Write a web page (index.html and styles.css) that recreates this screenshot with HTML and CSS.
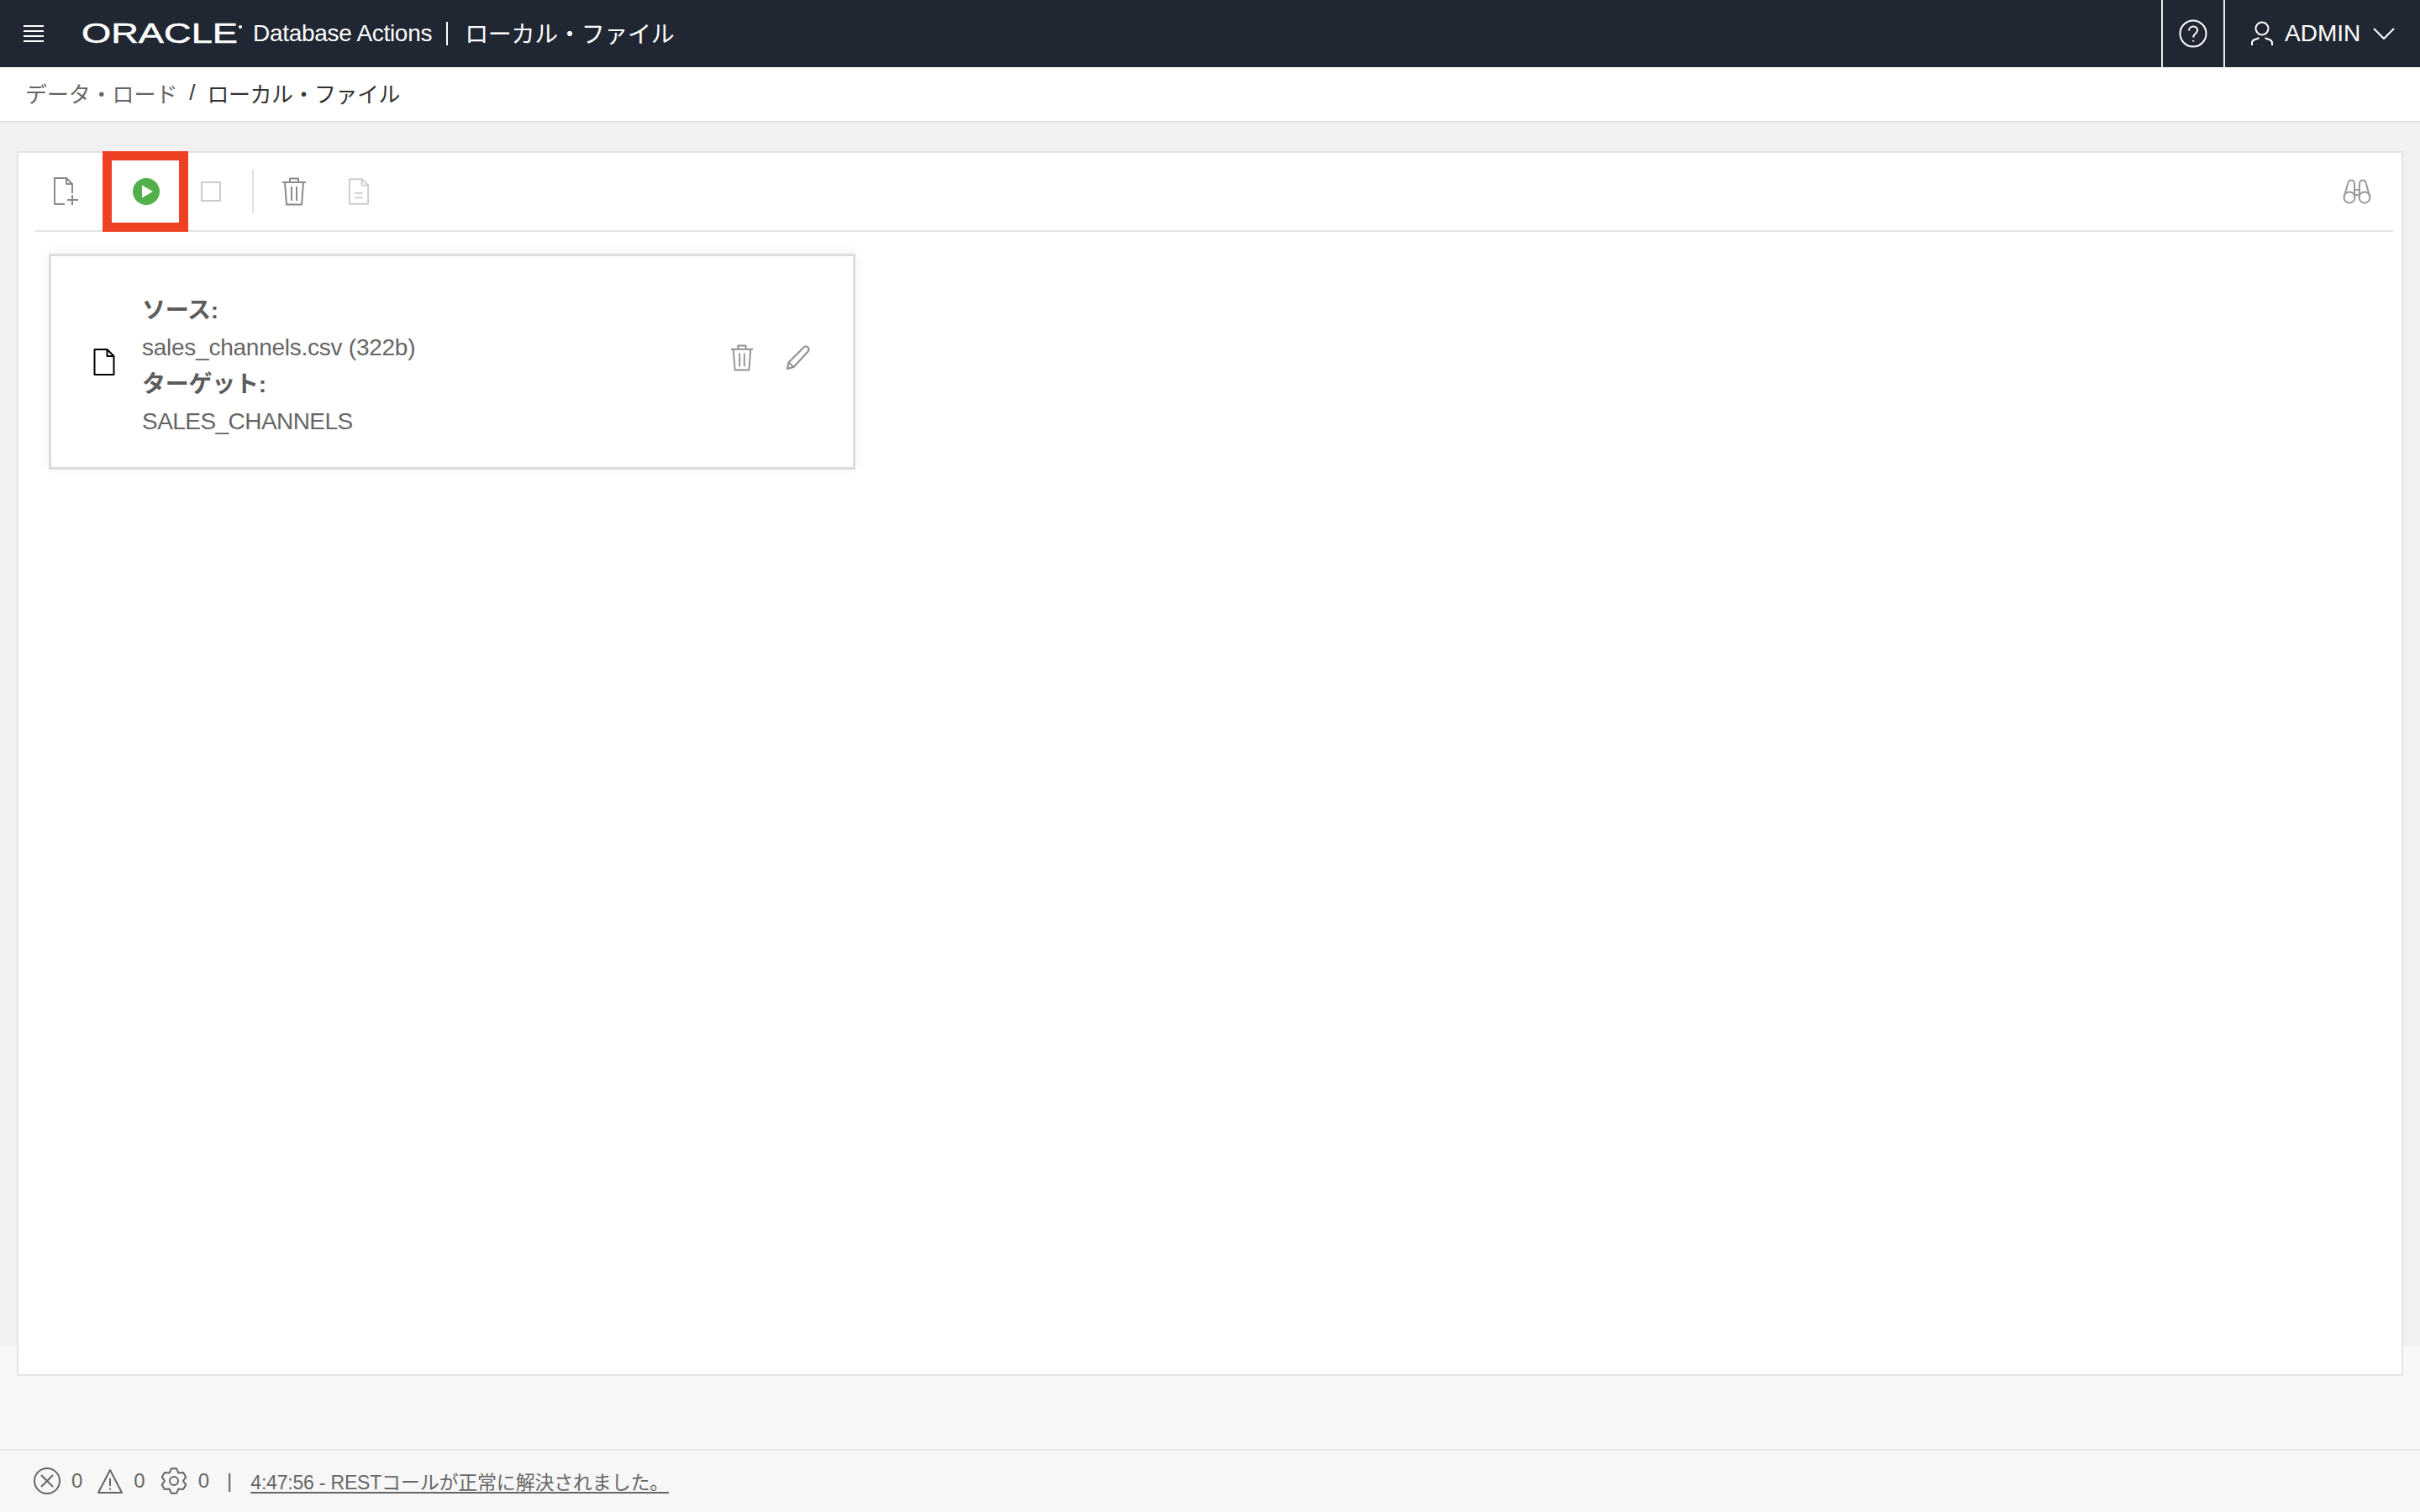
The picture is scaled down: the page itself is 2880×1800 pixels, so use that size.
FILE: index.html
```html
<!DOCTYPE html>
<html lang="ja">
<head>
<meta charset="utf-8">
<title>ローカル・ファイル</title>
<link rel="stylesheet" href="styles.css">
</head>
<body>
<header class="topbar">
  <div class="brand">
    <svg class="ico burger" viewBox="0 0 24 20"><path d="M0 1h24M0 7h24M0 13h24M0 19h24"/></svg>
    <svg class="logo" viewBox="0 0 192 26"><text x="0" y="24" textLength="186" lengthAdjust="spacingAndGlyphs">ORACLE</text><circle cx="189" cy="5" r="2"/></svg>
    <span class="app">Database Actions</span>
    <span class="pipe"></span>
    <span class="title">ローカル・ファイル</span>
  </div>
  <div class="tools">
    <div class="help"><svg class="ico" viewBox="0 0 34 34"><circle cx="17" cy="17" r="15.5"/><path d="M12 13.500c0-3 2.300-5 5.200-5s5 2 5 4.600c0 4-5 4-5 8.400"/><path d="M17.200 25v1.500"/></svg></div>
    <div class="user">
      <svg class="ico person" viewBox="0 0 26 30"><circle cx="13" cy="9" r="7.5"/><path d="M1 29v-3c0-2 1-3 3-3.800l5.500-2M25 29v-3c0-2-1-3-3-3.800l-5.500-2"/></svg>
      <span>ADMIN</span>
      <svg class="ico chevron" viewBox="0 0 26 14"><path d="M1 1l12 12L25 1"/></svg>
    </div>
  </div>
</header>
<nav class="crumbs"><span class="crumb-parent">データ・ロード</span><span class="crumb-sep">/</span><span class="crumb-current">ローカル・ファイル</span></nav>
<main class="main">
  <section class="panel">
    <div class="toolbar">
      <div class="tb-left">
        <button class="tb tb-new" type="button"><svg class="ico gray w30" viewBox="0 0 30 34"><path d="M13 32H1V1h14l7 7v11M15 1v7h7M22 21v12M16 27h13"/></svg></button>
        <button class="tb run" type="button"><svg class="play" viewBox="0 0 32 32"><circle cx="16" cy="16" r="16"/><path d="M11 8.500L24 16 11 23.500z"/></svg></button>
        <button class="tb stop" type="button"><span class="stopbox"></span></button>
        <span class="tb-div"></span>
        <button class="tb tb-trash" type="button"><svg class="ico gray w30" viewBox="0 0 30 34"><path d="M1 6h28M4 6l2 26.500h18L26 6M10 6V1.500h10V6M12 11v17M18 11v17"/></svg></button>
        <button class="tb" type="button"><svg class="ico light" viewBox="0 0 26 34"><path d="M1 1h16l8 8v24H1zM17 1v8h8M8 19h10M8 25h10"/></svg></button>
      </div>
      <svg class="ico binoc" viewBox="0 0 34 30"><circle cx="8" cy="22" r="6.5"/><circle cx="26" cy="22" r="6.5"/><path d="M1.500 22L6 6c.6-3 2-4.500 4-4.500s4 1.500 4 4.500v16M32.500 22L28 6c-.6-3-2-4.500-4-4.500S20 3 20 6v16M14 13h6M14 19h6"/></svg>
    </div>
    <article class="card">
      <svg class="ico filedark" viewBox="0 0 26 32"><path d="M1.500 1h15l8 8v22h-23zM16.500 1v8h8"/></svg>
      <div class="card-text">
        <div class="label">ソース:</div>
        <div>sales_channels.csv (322b)</div>
        <div class="label">ターゲット:</div>
        <div class="target">SALES_CHANNELS</div>
      </div>
      <div class="card-actions">
        <svg class="ico trash2" viewBox="0 0 30 34"><path d="M1 6h28M4 6l2 26.500h18L26 6M10 6V1.500h10V6M12 11v17M18 11v17"/></svg>
        <svg class="ico pencil" viewBox="0 0 30 30"><path d="M2 28l1.500-7.500L21.500 2.500c1.500-1.500 3.500-1.500 5 0s1.500 3.500 0 5L9.500 26zM3.500 20.500l6 5.500"/></svg>
      </div>
    </article>
  </section>
</main>
<footer class="status">
  <svg class="ico dim i1" viewBox="0 0 32 32"><circle cx="16" cy="16" r="15"/><path d="M9 9l14 14M23 9L9 23"/></svg><span class="n">0</span>
  <svg class="ico dim i2" viewBox="0 0 30 30"><path d="M15 2L1 29h28zM15 12v9M15 23.500v2"/></svg><span class="n">0</span>
  <svg class="ico dim i3" viewBox="0 0 32 32"><path d="M19.100 1.300h-6.200l-2.400 5.200-5.600-.5-3.200 5.400L5 16l-3.300 4.600 3.200 5.400 5.600-.5 2.400 5.200h6.200l2.400-5.200 5.600.5 3.200-5.400L27 16l3.300-4.600-3.200-5.400-5.600.5z"/><circle cx="16" cy="16" r="5"/></svg><span class="n n-last">0</span>
  <span class="bar">|</span>
  <a class="msg" href="#">4:47:56 - RESTコールが正常に解決されました。</a>
</footer>
</body>
</html>
```
FILE: styles.css
```css
*, *::before, *::after { box-sizing: border-box; }
html, body { margin: 0; height: 100%; }
body {
  width: 2880px; height: 1800px; display: flex; flex-direction: column; overflow: hidden;
  font-family: "Liberation Sans", "Noto Sans CJK JP", sans-serif; color: #666;
  background: #f7f7f7;
}
.ico { display: block; fill: none; stroke: currentColor; stroke-width: 2; stroke-linejoin: round; flex: none; overflow: visible; }
.topbar { height: 80px; flex: none; background: #202733; color: #fff; display: flex; justify-content: space-between; }
.brand { display: flex; align-items: center; padding-left: 28px; font-size: 28px; }
.burger { width: 24px; height: 20px; margin-right: 45px; }
.logo { width: 192px; height: 26px; margin-right: 12px; fill: #fff; overflow: visible; }
.logo text { font-family: "Liberation Sans", sans-serif; font-size: 33px; stroke: #fff; stroke-width: .5; }
.app { letter-spacing: -.3px; }
.pipe { width: 2px; height: 28px; background: #fff; margin: 0 20px 0 17px; }
.title { font-size: 28px; letter-spacing: -.3px; margin-bottom: 2px; }
.tools { display: flex; }
.help { width: 76px; border-left: 2px solid #e8e8e8; border-right: 2px solid #e8e8e8; display: flex; align-items: center; justify-content: center; }
.help svg { width: 34px; height: 34px; }
.user { width: 232px; padding-left: 31px; display: flex; align-items: center; font-size: 28px; }
.person { width: 26px; height: 30px; margin-right: 14px; }
.chevron { width: 26px; height: 14px; margin-left: 15px; }
.crumbs { height: 66px; flex: none; background: #fff; border-bottom: 2px solid #dfe3e8; padding-left: 30px; display: flex; align-items: center; font-size: 26px; color: #333; padding-bottom: 4px; }
.crumb-parent { color: #666; letter-spacing: -.1px; }
.crumb-sep { margin: 0 14px; }
.crumb-current { letter-spacing: -.5px; }
.main { flex: 1; padding: 34px 20px 87px; background: linear-gradient(#f1f1f1 0, #f1f1f1 1457px, #f7f7f7 1457px); }
.panel { width: 2840px; height: 1458px; background: #fff; border: 2px solid #e4e4e4; border-radius: 2px; padding: 0 10px 0 20px; }
.toolbar { height: 94px; border-bottom: 2px solid #e2e2e2; display: flex; align-items: center; justify-content: space-between; padding: 0 26px 0 22px; }
.tb-left { display: flex; align-items: center; position: relative; }
.tb { border: 0; background: none; padding: 0; display: flex; align-items: center; justify-content: center; color: #858585; }
.tb-new { width: 30px; margin-right: 64px; }
.run { width: 32px; position: relative; margin-right: 49px; }
.run::after { content: ""; position: absolute; left: -36px; top: -32px; width: 102px; height: 96px; border: 11px solid #ee4023; }
.play { width: 32px; height: 32px; display: block; }
.play circle { fill: #52b04a; }
.play path { fill: #fff; }
.stop { width: 24px; margin-right: 37px; }
.stopbox { display: block; width: 24px; height: 24px; border: 2px solid #ccc; }
.tb-div { width: 2px; height: 52px; background: #e2e2e2; margin-right: 33px; }
.tb-trash { width: 30px; margin-right: 50px; }
.w30 { width: 30px; height: 34px; }
.light { color: #ccc; width: 24px; height: 32px; }
.gray { color: #8a8a8a; }
.binoc { width: 34px; height: 30px; color: #999; }
.card { position: relative; width: 960px; height: 257px; margin: 26px 0 0 16px; border: 3px solid #dcdcdc; box-shadow: 0 0 16px rgba(0,0,0,.06); display: flex; align-items: center; padding: 0 50px; background: #fff; }
.filedark { width: 26px; height: 32px; color: #000; margin-right: 33px; }
.card-text { flex: 1; font-size: 28px; line-height: 44px; letter-spacing: -.25px; color: #666; padding-top: 11px; margin-left: -1px; }
.label { font-weight: 700; color: #5c5c5c; }
.target { letter-spacing: -.55px; }
.card-actions { display: flex; align-items: center; gap: 38px; margin: 0 0 9px 0; }
.trash2 { width: 28px; height: 32px; color: #8f8f8f; }
.pencil { width: 30px; height: 30px; color: #8f8f8f; }
.status { height: 76px; flex: none; background: #f7f7f7; border-top: 2px solid #e6e6e6; display: flex; align-items: center; padding: 0 0 2px 40px; font-size: 24px; color: #666; }
.status .ico { color: #666; }
.i1 { width: 32px; height: 32px; }
.i2 { width: 30px; height: 30px; }
.i3 { width: 32px; height: 32px; }
.n { margin: 0 18px 0 13px; }
.bar { margin: 0 22px 0 3px; }
.msg { color: #666; font-size: 23px; letter-spacing: -.2px; text-decoration: underline; text-underline-offset: 3px; }
```
